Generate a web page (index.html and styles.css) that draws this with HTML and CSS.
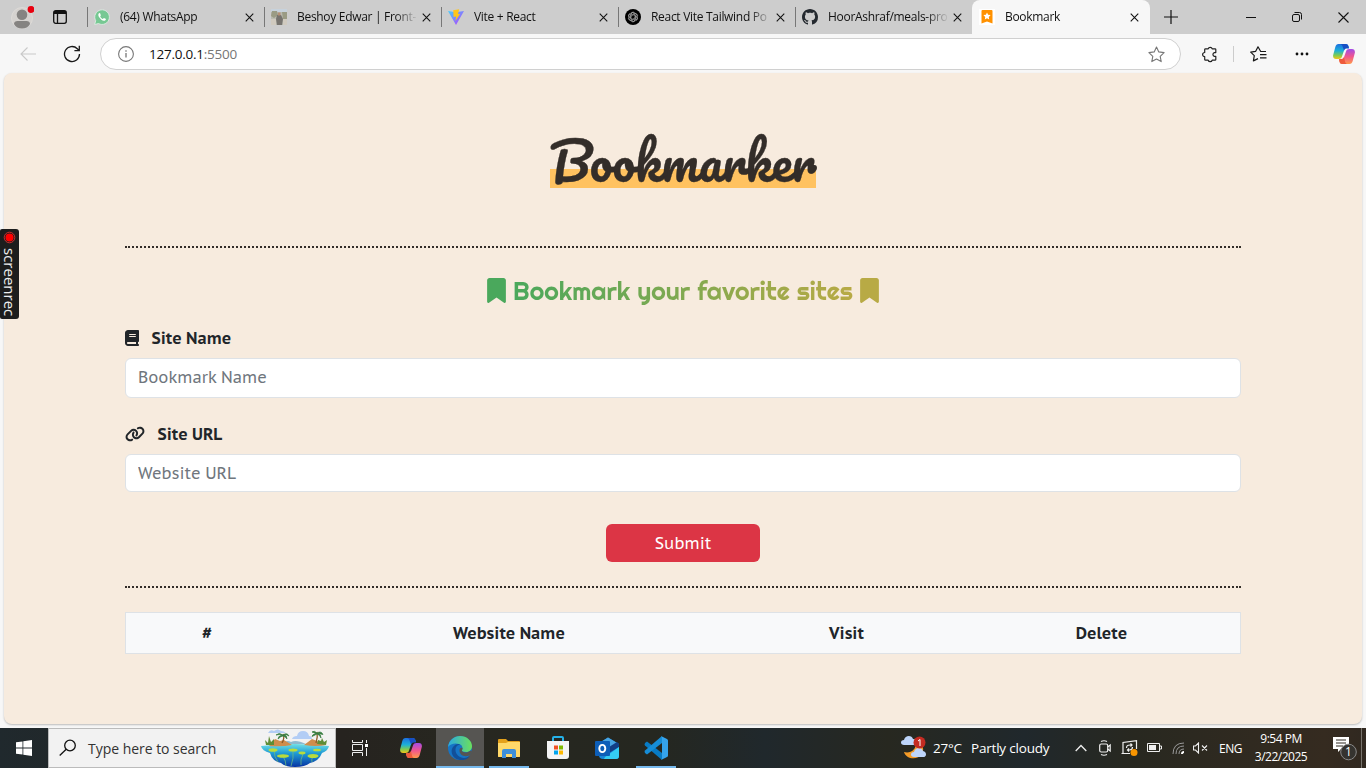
FILE: index.html
```html
<!DOCTYPE html>
<html lang="en">
<head>
<meta charset="utf-8">
<title>Bookmark</title>
<link rel="stylesheet" href="styles.css">
</head>
<body>
<svg class="defs" width="0" height="0">
  <defs>
    <linearGradient id="cpA" x1="0" y1="0" x2="0" y2="1"><stop offset="0" stop-color="#1c6fe0"/><stop offset=".45" stop-color="#1cb0d8"/><stop offset=".75" stop-color="#7ccb52"/><stop offset="1" stop-color="#f5c518"/></linearGradient>
    <linearGradient id="cpB" x1="0" y1="0" x2="0" y2="1"><stop offset="0" stop-color="#a24be8"/><stop offset=".5" stop-color="#f0568e"/><stop offset="1" stop-color="#ff9a4a"/></linearGradient>
    <linearGradient id="vite" x1="0" y1="0" x2="1" y2="1"><stop offset="0" stop-color="#41d1ff"/><stop offset="1" stop-color="#bd34fe"/></linearGradient>
    <linearGradient id="edgeA" x1="0" y1="0" x2="1" y2="0"><stop offset="0" stop-color="#2ba9e0"/><stop offset="1" stop-color="#6be05c"/></linearGradient>
    <linearGradient id="sea" x1="0" y1="0" x2="0" y2="1"><stop offset="0" stop-color="#6fdfe6"/><stop offset=".4" stop-color="#1f9cd4"/><stop offset="1" stop-color="#0734a4"/></linearGradient>
    <symbol id="x" viewBox="0 0 10 10"><path d="M.8.8 9.2 9.2M9.2.8.8 9.2" stroke="#111" stroke-width="1.2" fill="none"/></symbol>
    <symbol id="copilot" viewBox="0 0 22 20">
      <path d="M5.500 0H13c1.300 0 2 .8 2.400 2l.6 2h-2.200c-1.500 0-2.300.9-2.700 2.200L9 12.500C8.400 14.300 7.300 15 5.700 15H3C.8 15-.3 13.300.2 11L2.300 3C2.900 1 3.800 0 5.500 0z" fill="url(#cpA)"/>
      <path d="M12.500 0c1.600 0 2.500.7 2.900 2l.6 2.600h-2.200c-1.500 0-2.200.6-2.700 2L9.700 3C9.400 1.200 8.600.2 7 0z" fill="#174fc4"/>
      <path d="M16.500 20H9c-1.300 0-2-.8-2.400-2L6 15.800h2.200c1.500 0 2.300-.9 2.700-2.200L13 7.500C13.600 5.700 14.700 5 16.300 5H19c2.200 0 3.300 1.700 2.800 4l-2.100 8c-.6 2-1.500 3-3.200 3z" fill="url(#cpB)"/>
      <path d="M9 20c-1.300 0-2-.8-2.400-2L6 15h2.200c1.500 0 2.300-.7 2.700-2l1 4c.3 1.800 1 2.800 2.600 3z" fill="#ee5a3c"/>
    </symbol>
    <symbol id="mark" viewBox="0 0 384 512"><path d="M0 48V487.700C0 501.100 10.900 512 24.300 512c5 0 9.900-1.500 14-4.400L192 400 345.700 507.600c4.100 2.900 9 4.400 14 4.400c13.400 0 24.300-10.900 24.300-24.300V48c0-26.500-21.500-48-48-48H48C21.500 0 0 21.500 0 48z"/></symbol>
  </defs>
</svg>

<header class="tabstrip">
  <div class="cell w44"><svg width="24" height="26" viewBox="0 0 24 26"><circle cx="12" cy="14" r="10.500" fill="#d5d2cf" stroke="#dedbd8"/><circle cx="12" cy="10.800" r="5.300" fill="#858381"/><path d="M4 20c0-2 1.500-3 3.500-3h9c2 0 3.500 1 3.500 3-1.500 3-4.500 4.500-8 4.500S5.500 23 4 20z" fill="#858381"/><circle cx="21" cy="5.500" r="3.400" fill="#e8000f"/></svg></div>
  <div class="cell w32"><svg width="14" height="14" viewBox="0 0 14 14" fill="none" stroke="#111" stroke-width="1.300"><rect x=".7" y=".7" width="12.600" height="12.600" rx="2"/><path d="M1 2.500h12" stroke-width="3"/><path d="M4.500 3v10"/></svg></div>
  <nav class="tabs">
    <div class="tab"><svg class="fav" viewBox="0 0 16 16"><path d="M.7 15.500 1.700 11.700A7.300 7.300 0 1 1 4.500 14.500z" fill="#77c893" stroke="#e5f0e8" stroke-width=".8"/><path d="M5 4.200c-1 1-.8 2.500.2 4 1.300 2 3 3.300 4.700 3.600 1 .1 1.900-.5 2-1.500 0-.4-1.500-1.200-2-1.200-.4 0-.7.9-1 .9-.9-.1-2.500-1.700-2.700-2.500 0-.3.700-.8.600-1.200-.1-.5-.6-2-1-2.200z" fill="#fff"/></svg><span class="title">(64) WhatsApp</span><svg class="close"><use href="#x"/></svg></div>
    <div class="tab"><svg class="fav" viewBox="0 0 16 16"><path fill="#b9bab0" d="M0 0h16v16H0z"/><path fill="#c7d2dc" d="M0 0h16v3H0z"/><path fill="#9a9b84" d="M1 2h5l1 4-4 3-3-2zM11 3h5v7h-4z"/><path fill="#d0cabf" d="M0 10h5v6H0zM12 10h4v6h-4z"/><path fill="#77746f" d="M6 6h4l2 4-1 6H6L5 10z"/><path fill="#b58f76" d="M7 3.500h2.500v3H7z"/></svg><span class="title">Beshoy Edwar | Front-</span><svg class="close"><use href="#x"/></svg></div>
    <div class="tab"><svg class="fav" viewBox="0 0 16 16"><path d="M0 2 7.600 3.300 16 2 8 16z" fill="url(#vite)"/><path d="M5.200 1.200 11.200.2 10 5l2.200-.3L7.400 12l.8-4.600-2.600.5z" fill="#ffc51c"/></svg><span class="title">Vite + React</span><svg class="close"><use href="#x"/></svg></div>
    <div class="tab"><svg class="fav" viewBox="0 0 16 16"><circle cx="8" cy="8" r="8"/><g fill="none" stroke="#ddd" stroke-width=".6" transform="translate(1.200 1.200) scale(.85)"><path id="petal" d="M6 8V4.700C6 2.200 9 1.500 10.200 3.200M6 5.700l3-1.700c2-1.100 4 .6 3.700 2.500"/><use href="#petal" transform="rotate(60 8 8)"/><use href="#petal" transform="rotate(120 8 8)"/><use href="#petal" transform="rotate(180 8 8)"/><use href="#petal" transform="rotate(240 8 8)"/><use href="#petal" transform="rotate(300 8 8)"/></g></svg><span class="title">React Vite Tailwind Po</span><svg class="close"><use href="#x"/></svg></div>
    <div class="tab"><svg class="fav" viewBox="0 0 16 16"><path fill="#24292f" d="M8 0C3.580 0 0 3.580 0 8c0 3.540 2.290 6.530 5.470 7.590.4.070.55-.17.55-.38 0-.19-.01-.82-.01-1.490-2.010.37-2.530-.49-2.690-.94-.09-.23-.48-.94-.82-1.130-.28-.15-.68-.52-.01-.53.630-.01 1.080.58 1.230.82.720 1.210 1.870.87 2.330.66.070-.52.280-.87.510-1.070-1.780-.2-3.640-.89-3.640-3.950 0-.87.310-1.590.82-2.150-.08-.2-.36-1.020.08-2.120 0 0 .67-.21 2.200.82.640-.18 1.320-.27 2-.27s1.360.09 2 .27c1.530-1.040 2.200-.82 2.200-.82.440 1.100.16 1.920.08 2.120.510.56.820 1.270.82 2.150 0 3.070-1.870 3.750-3.650 3.950.290.25.540.73.540 1.480 0 1.070-.01 1.930-.01 2.200 0 .21.150.46.550.38A8.010 8.010 0 0 0 16 8c0-4.420-3.580-8-8-8z"/></svg><span class="title">HoorAshraf/meals-pro</span><svg class="close"><use href="#x"/></svg></div>
    <div class="tab active"><svg class="fav" viewBox="0 0 16 16"><path fill="#fff" d="M0 0h16v16H0z"/><path d="M3.500 1h9q1 0 1 1v12.500L8 12.500l-5.500 2V2q0-1 1-1z" fill="#ff9100"/><path d="m8 3.500 1.100 2.300 2.500.3-1.800 1.800.4 2.500L8 9.200l-2.200 1.200.4-2.500-1.800-1.800 2.500-.3z" fill="#fff"/></svg><span class="title">Bookmark</span><svg class="close"><use href="#x"/></svg></div>
  </nav>
  <div class="cell w42"><svg width="14" height="14" viewBox="0 0 14 14"><path d="M7 0v14M0 7h14" stroke="#111" stroke-width="1.200"/></svg></div>
  <div class="window-buttons">
    <div class="cell w46"><svg width="10" height="10"><path d="M0 5.500h10" stroke="#111"/></svg></div>
    <div class="cell w46"><svg width="10" height="10" fill="none" stroke="#111"><rect x=".5" y="2.500" width="7" height="7" rx="1.500"/><path d="M2.500.5H7.500q2 0 2 2v5"/></svg></div>
    <div class="cell w46"><svg width="11" height="11" viewBox="0 0 11 11"><path d="m.5.5 10 10M10.500.5l-10 10" stroke="#111" stroke-width="1.100"/></svg></div>
  </div>
</header>

<div class="toolbar">
  <div class="cell w44"><svg width="16" height="14" fill="none" stroke="#c9c9c9" stroke-width="1.100"><path d="M16 7H1M7.500.5 1 7l6.500 6.500"/></svg></div>
  <div class="cell w44"><svg width="18" height="18" fill="none" stroke="#191919" stroke-width="1.300"><path d="M16.500 9A7.500 7.500 0 1 1 14.300 3.700L16 5.400M16.300.8v4.900h-4.900"/></svg></div>
  <div class="address">
    <svg width="16" height="16" fill="none" stroke="#777" stroke-width="1.100"><circle cx="8" cy="8" r="7.400"/><path d="M8 7v4.600M8 4.300v1.400" stroke-width="1.300"/></svg>
    <span class="url">127.0.0.1<span class="port">:5500</span></span>
    <svg class="star" width="17" height="17" viewBox="0 0 17 17" fill="none" stroke="#777" stroke-width="1.100" stroke-linejoin="round"><path d="m8.500 1 2.300 4.900 5.300.7-3.900 3.700 1 5.300-4.700-2.600-4.700 2.600 1-5.300L.9 6.600l5.300-.7z"/></svg>
  </div>
  <div class="cell w46"><svg width="16" height="17" viewBox="0 0 16 17" fill="none" stroke="#222" stroke-width="1.200" stroke-linejoin="round"><path d="M3.500 2.800h2.700a2.100 2.100 0 0 1 4 0H13q.8 0 .8.800v3h-1.500a2 2 0 0 0 0 3.800h1.500v3q0 .8-.8.800h-2.800a2.100 2.100 0 0 1-4 0H3.500q-.8 0-.8-.8v-2.700a2.100 2.100 0 0 1 0-4.200V3.600q0-.8.8-.8z"/></svg></div>
  <div class="divider"></div>
  <div class="cell w48"><svg width="17" height="16" viewBox="0 0 17 16" fill="none" stroke="#191919" stroke-width="1.200" stroke-linejoin="round"><path d="M15 5.500h-4.300L8 .8 5.700 5.300l-5 .8 3.600 3.600-.9 5.200L8 12.600M10.500 5.500H16M10 8.700h6.500M10 11.800h6.500"/></svg></div>
  <div class="cell w40"><svg width="14" height="4"><g fill="#111"><circle cx="2" cy="2" r="1.400"/><circle cx="7" cy="2" r="1.400"/><circle cx="12" cy="2" r="1.400"/></g></svg></div>
  <div class="cell w44"><svg width="22" height="20"><use href="#copilot"/></svg></div>
</div>

<main class="viewport">
  <div class="page">
    <div class="head"><h1>Bookmarker</h1></div>
    <section class="entry">
      <h2><svg><use href="#mark" fill="#4aa85c"/></svg><span>Bookmark your favorite sites</span><svg><use href="#mark" fill="#b8aa45"/></svg></h2>
      <label class="label"><svg width="14" height="16" viewBox="0 0 448 512"><path d="M96 0C43 0 0 43 0 96V416c0 53 43 96 96 96H384h32c17.700 0 32-14.300 32-32s-14.300-32-32-32V384c17.700 0 32-14.300 32-32V32c0-17.700-14.300-32-32-32H384 96zm0 384H352v64H96c-17.700 0-32-14.300-32-32s14.300-32 32-32zm32-240c0-8.800 7.200-16 16-16H336c8.800 0 16 7.200 16 16s-7.200 16-16 16H144c-8.800 0-16-7.200-16-16zm16 48H336c8.800 0 16 7.200 16 16s-7.200 16-16 16H144c-8.800 0-16-7.200-16-16s7.200-16 16-16z"/></svg><span>Site Name</span></label>
      <input class="field name" placeholder="Bookmark Name">
      <label class="label"><svg width="20" height="16" viewBox="0 0 640 512"><path d="M579.800 267.700c56.500-56.500 56.500-148 0-204.500c-50-50-128.800-56.500-186.300-15.400l-1.600 1.100c-14.400 10.300-17.700 30.300-7.400 44.600s30.300 17.700 44.600 7.400l1.600-1.100c32.100-22.900 76-19.300 103.800 8.600c31.500 31.500 31.500 82.500 0 114L422.300 334.800c-31.500 31.500-82.500 31.500-114 0c-27.900-27.900-31.500-71.800-8.600-103.800l1.100-1.600c10.300-14.400 6.900-34.400-7.400-44.600s-34.400-6.900-44.600 7.400l-1.100 1.600C206.500 251.200 213 330 263 380c56.500 56.500 148 56.500 204.500 0L579.800 267.700zM60.200 244.300c-56.500 56.500-56.500 148 0 204.500c50 50 128.800 56.500 186.300 15.400l1.600-1.100c14.400-10.300 17.700-30.300 7.400-44.600s-30.300-17.700-44.600-7.400l-1.600 1.100c-32.100 22.900-76 19.300-103.800-8.600C74 372 74 321 105.500 289.500L217.700 177.200c31.500-31.500 82.500-31.500 114 0c27.900 27.900 31.500 71.800 8.600 103.900l-1.100 1.600c-10.300 14.400-6.900 34.400 7.400 44.600s34.400 6.900 44.600-7.400l1.100-1.600C433.500 260.800 427 182 377 132c-56.500-56.500-148-56.500-204.500 0L60.200 244.300z"/></svg><span>Site URL</span></label>
      <input class="field" placeholder="Website URL">
      <button class="submit">Submit</button>
    </section>
    <div class="thead"><span>#</span><span>Website Name</span><span>Visit</span><span>Delete</span></div>
  </div>
  <aside class="recorder"><svg width="13" height="13"><circle cx="6.500" cy="6.500" r="5.300" fill="none" stroke="#e33" stroke-width=".8"/><circle cx="6.500" cy="6.500" r="4" fill="red"/></svg><span>screenrec</span></aside>
</main>

<footer class="taskbar">
  <div class="cell w48"><svg width="16" height="16" fill="#fff"><path d="M0 2.300 6.500 1.400v6.200H0zM7.300 1.300 16 0v7.600H7.300zM0 8.400h6.500v6.200L0 13.700zM7.300 8.400H16V16l-8.700-1.300z"/></svg></div>
  <div class="search">
    <svg width="18" height="18" fill="none" stroke="#111" stroke-width="1.300"><circle cx="11" cy="6.500" r="5.300"/><path d="m7.200 10.300-6.500 6.200"/></svg>
    <span>Type here to search</span>
    <svg class="island" width="68" height="38" viewBox="0 0 68 38">
      <path d="M7 4q2-4 6-2 4-3 7 0 3 0 5 2zM31 10q1-3 5-3 1-5 6-5 5 0 6 5 3 0 3 3z" fill="#b2cdf5"/>
      <path d="M20 15q6-5 10-2 5-3 15 2z" fill="#8db9cf"/>
      <path d="M0 17q34-4 68 0-1 5-7 7-3 8-12 10-5 4-15 4-10 0-14-4-9-2-11-10-8-2-9-7z" fill="url(#sea)"/>
      <path d="M8 17 14 10l5 2 4-1 8 5q-10 2-23 1zM43 16l8-6 5 2 9 4q-10 2-22 0z" fill="#cf8d4c"/>
      <path d="m5 16-1-5 3 3 1-7 2 6 3-3v6zM56 15l1-4 3 1 1-3 2 4 3-2-1 5z" fill="#5e8d36"/>
      <path d="M21 14q3-5 1-9M55 14q2-6 1-11" stroke="#8d5c28" stroke-width="1.300" fill="none"/>
      <path d="M22 6q-4-3-7 0 4-1 6 0-4 1-4 4 3-3 5-3 2 0 4 3 0-4-3-4 2-1 5 1-2-4-6-1zM56 4q-3-3-5-1l4 1.500q-4 1-4 3l5-2.500q3 1 4 4 0-4-3-4.500l5 1q-2-4-6-1.500z" fill="#367d40" stroke="#367d40" stroke-width=".7"/>
      <path d="M13 21q0 7 4 12M32 22q1 7-2 15M22 27q3 5 3 10M42 25q-3 6-2 11M52 27q-2 4-1 6" stroke="#69ba81" stroke-width=".8" fill="none"/>
      <g fill="#b9db3c"><ellipse cx="12" cy="21" rx="4.500" ry="1.800"/><ellipse cx="32" cy="21" rx="4.500" ry="1.500"/><ellipse cx="22" cy="27" rx="6" ry="1.800"/><ellipse cx="41" cy="24" rx="3.500" ry="1.400"/><ellipse cx="52" cy="27" rx="5.500" ry="2"/><ellipse cx="56" cy="21" rx="4" ry="1.300"/></g>
    </svg>
  </div>
  <div class="apps">
    <div class="cell w48"><svg width="16" height="16" fill="none" stroke="#eee"><path d="M.5 0v2.500h10V0M.5 4.500h10v6H.5zM.5 16v-3.500h10V16M14.500 0v3M14.500 8v8"/><path d="M13 4h3v3h-3z" fill="#fff" stroke="none"/></svg></div>
    <div class="cell w48"><svg width="22" height="20"><use href="#copilot"/></svg></div>
    <div class="cell w48 current"><svg width="24" height="24" viewBox="0 0 24 24"><circle cx="12" cy="12" r="12" fill="#1674c5"/><path d="M0 11C1 4 6 0 12 0c7 0 12 5 12 10 0 4-3 6-6 6-3 0-4.500-1-4-2 1-2 .5-5-3-6C7 6.500 2 8 0 11z" fill="url(#edgeA)"/><path d="M7.500 13C7 18 11 22 16 22c2 0 4-.8 6-2-3 4-8 5-12 3.500C4 22 2 15 5 11c2-2.500 5-3.500 7-2.500-2.500.5-4.200 2-4.500 4.500z" fill="#124f99"/><path d="M14.500 12c.4 1-.8 2-.6 2.800.4 1.500 3 2 5.500 1.500l3.800-1.800L24 16l-2 3c-5 3-11 0-10.500-5 .2-1.500 1.500-2.500 3-2z" fill="#565552"/></svg></div>
    <div class="cell w48 open"><svg width="22" height="19" viewBox="0 0 22 19"><path d="M0 1q0-1 1-1h7l2 2h11q1 0 1 1v15H0z" fill="#e4a11b"/><path d="M0 4h8l2-1h12v14q0 1-1 1H1q-1 0-1-1z" fill="#ffd969"/><path d="M4 19v-7q0-2 2-2h10q2 0 2 2v7h-4v-4H8v4z" fill="#3d8fd9"/></svg></div>
    <div class="cell w48"><svg width="24" height="24" viewBox="0 0 24 24"><path d="M7 6V2q0-1 1-1h8q1 0 1 1v4" fill="none" stroke="#25b1e8" stroke-width="2"/><path d="M1 5h22v15q0 3-3 3H4q-3 0-3-3z" fill="#f4f4f4"/><path d="M8 9.500h4v4H8z" fill="#f25022"/><path d="M13 9.500h4v4h-4z" fill="#7fba00"/><path d="M8 14.500h4v4H8z" fill="#00a4ef"/><path d="M13 14.500h4v4h-4z" fill="#ffb900"/></svg></div>
    <div class="cell w48"><svg width="24" height="23" viewBox="0 0 24 23"><path d="M4 6 13 .5 24 7v12q0 3-3 3H8q-4 0-4-4z" fill="#1687d9"/><path d="m5 5.500 8-5L22 6l-8 6z" fill="#47a5e4"/><path d="m14 10 8-5 2 2v3l-10 6z" fill="#123f86"/><path d="M10 20 24 10v9q0 3-3 3H9z" fill="#35cdf3"/><rect y="4" width="15" height="15" rx="1" fill="#0d5eb8"/><ellipse cx="7.300" cy="11.500" rx="3" ry="3.600" fill="none" stroke="#fff" stroke-width="1.900"/></svg></div>
    <div class="cell w48 open"><svg width="24" height="24" viewBox="0 0 24 24"><path d="m1 7 2-1.500L18 17v7L1 9.500Q0 8.500 1 7z" fill="#087bc4"/><path d="m1 17 2 1.500L18 7V0L1 14.500Q0 15.500 1 17z" fill="#168dd7"/><path d="m17 0 6 3q1 .5 1 1.500v15q0 1-1 1.500l-6 3q1-.5 1-2V2q0-1.500-1-2z" fill="#35a4ed"/></svg></div>
  </div>
  <div class="tray">
    <div class="weather"><svg width="25" height="24" viewBox="0 0 25 24"><path d="M15 5c1 8-5 13-12 11 2 7 13 9 18 2 3-5 0-11-6-13z" fill="#f49b27"/><path d="M3 9C-1 9-1 4 3 4c1-5 8-5 9-1 5 0 5 6 1 6zM13 21c-4 0-4-5 0-5 1-5 8-5 9-1 4 1 4 6 0 6z" fill="#bdd5fb"/><circle cx="18.500" cy="6.500" r="6" fill="#c42b22"/><path d="m17 5 2-1.500V10" fill="none" stroke="#fff"/></svg><span class="temp">27°C</span><span class="sky">Partly cloudy</span></div>
    <div class="cell chevron"><svg width="12" height="8" fill="none" stroke="#eee" stroke-width="1.300"><path d="m.7 7 5.300-5.500L11.300 7"/></svg></div>
    <div class="cell w24"><svg width="12" height="16" fill="none" stroke="#eee" stroke-width="1.200"><rect x=".7" y="4" width="8" height="8" rx="1.500"/><path d="m8.700 7 2.500-2v6L8.700 9M2 1.500Q5 0 8 1.500M2 14.500Q5 16 8 14.500"/></svg></div>
    <div class="cell w24"><svg width="17" height="16" fill="none" stroke="#eee" stroke-width="1.200"><path d="M9 13.500H2v-11L15.500.7V9M.5 13.500h3M5.500 8q0-3 3.500-3h2M9.500 3.500 11 5 9.500 6.500M11.500 7q0 3-3 3h-2M8 8.500 6.500 10 8 11.500"/><circle cx="13" cy="12.500" r="3.500" fill="#f99500" stroke="none"/></svg></div>
    <div class="cell w26"><svg width="15" height="10" fill="none" stroke="#eee"><path d="M.5.500h12v8H.5zM12.500 3h2v3h-2"/><path d="M2 2h7v5H2z" fill="#eee" stroke="none"/></svg></div>
    <div class="cell w22"><svg width="13" height="13" fill="none" stroke="#999"><path d="M1 12Q1 1 12 1M4 12Q4 4 12 4M7 12Q7 7 12 7" /><path d="M10 12q0-2 2-2" stroke="#fff" stroke-width="2"/></svg></div>
    <div class="cell w22"><svg width="15" height="12" fill="none" stroke="#eee" stroke-width="1.100"><path d="M.5 4h2l3-3v10l-3-3h-2zM9 3.500l5 5M14 3.500l-5 5"/></svg></div>
    <span class="lang">ENG</span>
    <div class="clock"><span>9:54 PM</span><span>3/22/2025</span></div>
    <div class="notes"><svg width="25" height="25" viewBox="0 0 25 25"><path d="M0 1h16v12H8l-3 3v-3H0z" fill="#fff"/><path d="M3 4h10M3 7h10M3 10h7" stroke="#302b22"/><circle cx="15.500" cy="16" r="7.800" fill="#35332f" stroke="#888"/></svg><span class="count">1</span></div>
    <div class="show-desktop"></div>
  </div>
</footer>
</body>
</html>
```
FILE: styles.css
```css
* { box-sizing: border-box; }
body { margin: 0; width: 1366px; height: 768px; overflow: hidden; display: flex; flex-direction: column; background: #f7f7f7; font-family: "Segoe UI", "Open Sans", "Noto Sans", sans-serif; color: #111; }
svg { display: block; flex: none; }
.defs { position: absolute; }
.cell { display: flex; align-items: center; justify-content: center; flex: none; }
.w22 { width: 22px; } .w24 { width: 24px; } .w26 { width: 26px; }
.w32 { width: 32px; } .w40 { width: 40px; } .w42 { width: 42px; }
.w44 { width: 44px; } .w46 { width: 46px; } .w48 { width: 48px; }

.tabstrip { height: 34px; flex: none; background: #cdcdcd; display: flex; }
.tabs { display: flex; margin-left: 11px; }
.tab { width: 177px; height: 34px; display: flex; align-items: center; padding: 0 9px 0 7px; background: linear-gradient(#777, #777) 0 7px / 1px 20px no-repeat; }
.tab .fav { width: 16px; height: 16px; }
.tab .title { width: 127px; margin-left: 10px; margin-top: -1px; white-space: nowrap; font-size: 12px; letter-spacing: -0.3px; -webkit-mask-image: linear-gradient(90deg, #000 98px, transparent 121px); mask-image: linear-gradient(90deg, #000 98px, transparent 121px); }
.tab .close { width: 9px; height: 9px; margin-left: -2px; }
.tab.active { width: 178px; background: #f7f7f7; border-radius: 8px 8px 0 0; }
.window-buttons { margin-left: auto; display: flex; }

.toolbar { height: 39px; flex: none; display: flex; align-items: center; padding: 1px 0 0 6px; background: #f7f7f7; }
.address { width: 1081px; height: 32px; margin: 0 6px; padding: 0 15px 0 17px; border: 1px solid #d0d0d0; border-radius: 16px; background: #fff; display: flex; align-items: center; }
.url { margin-left: 15px; font-size: 13.5px; letter-spacing: -0.25px; }
.port { color: #767676; }
.star { margin-left: auto; }
.divider { width: 1px; height: 16px; background: #ccc; }

.viewport { height: 655px; flex: none; position: relative; padding: 0 4px 4px; }
.page { height: 651px; background: #f7ebde; border-radius: 8px; padding: 0 121px; box-shadow: 0 1px 2px #bbb; font-family: "PT Sans Caption", "Noto Sans", sans-serif; }
.head { height: 175px; padding-top: 48px; display: flex; justify-content: center; align-items: flex-start; border-bottom: 2px dotted #332d29; }
h1 { height: 67px; margin: 0; background: linear-gradient(#ffc260, #ffc260) 0 48px / 100% 19px no-repeat; color: #332d29; font: 400 50.300px/80px Pacifico, Lato, sans-serif; white-space: nowrap; -webkit-text-stroke: 0.3px #332d29; }
.entry { height: 340px; border-bottom: 2px dotted #332d29; display: flex; flex-direction: column; }
h2 { height: 32px; margin: 26px 0 20px; display: flex; justify-content: center; align-items: center; gap: 7px; font: 400 25px/32px Righteous, Lato, sans-serif; }
h2 svg { width: 19px; height: 25px; }
h2 span { padding-top: 2px; white-space: nowrap; background: linear-gradient(90deg, #4aa85c, #b8aa45); -webkit-background-clip: text; background-clip: text; color: transparent; }
.label { height: 24px; display: flex; align-items: center; gap: 12.5px; font-weight: 700; font-size: 16px; color: #212529; }
.label svg { fill: #212529; }
.field { height: 38px; width: 100%; flex: none; margin: 8px 0 0; padding: 0 12px; border: 1px solid #dee2e6; border-radius: 6px; background: #fff; font: 16px "PT Sans Caption", "Noto Sans", sans-serif; }
.field.name { height: 40px; margin-bottom: 24px; padding-bottom: 2px; }
.field::placeholder { color: #6f767d; opacity: 1; }
.submit { width: 154px; height: 38px; flex: none; margin: 32px auto 0; border: 0; border-radius: 6px; background: #dc3545; color: #fff; font: 16px "PT Sans Caption", "Noto Sans", sans-serif; }
.thead { height: 42px; margin-top: 24px; border: 1px solid #dee2e6; background: #f8f9fa; display: grid; grid-template-columns: 162px 442px 233px 277px; align-items: center; text-align: center; font-weight: 700; font-size: 16px; color: #212529; }
.recorder { position: absolute; left: 0; top: 156px; width: 19px; height: 90px; border-radius: 2px 3px 3px 2px; background: #1d1d1d; color: #eee; display: flex; flex-direction: column; align-items: center; padding-top: 2px; gap: 4px; }
.recorder span { writing-mode: vertical-rl; line-height: 18px; font-size: 15px; white-space: nowrap; }

.taskbar { height: 40px; flex: none; display: flex; color: #fff; background: linear-gradient(90deg, #20292d 0, #26231f 25%, #272720 34%, #252720 48%, #20282c 56%, #272820 65%, #20282c 75%, #282820 83%, #352b20 97%, #302820); }
.search { width: 288px; border: 1px solid #bbb; background: #f2f2f2; color: #333; display: flex; align-items: center; padding: 0 6px 0 10px; font-size: 14px; }
.search span { margin-left: 11px; letter-spacing: -0.03px; white-space: nowrap; }
.island { margin-left: auto; }
.apps { display: flex; gap: 1px; }
.apps .cell:first-child { margin-right: 2px; }
.current { background: #565552; }
.current, .open { border-bottom: 2px solid #76b9ed; padding-top: 2px; }
.apps .open { width: 40px; margin: 0 4px; }
.tray { margin-left: auto; display: flex; align-items: center; font-size: 13.5px; }
.weather { width: 168px; display: flex; align-items: center; white-space: nowrap; letter-spacing: -0.2px; }
.temp { width: 38px; margin-left: 7px; }
.chevron { width: 24px; }
.lang { width: 32px; padding-left: 8px; font-size: 12px; letter-spacing: -0.5px; }
.clock { width: 76px; display: flex; flex-direction: column; align-items: center; font-size: 12px; line-height: 18px; letter-spacing: -0.5px; }
.notes { width: 42px; padding-left: 14px; position: relative; }
.count { position: absolute; left: 26px; top: 8px; font-size: 12px; line-height: 16px; }
.show-desktop { width: 5px; height: 40px; border-left: 1px solid #77736c; }
```
